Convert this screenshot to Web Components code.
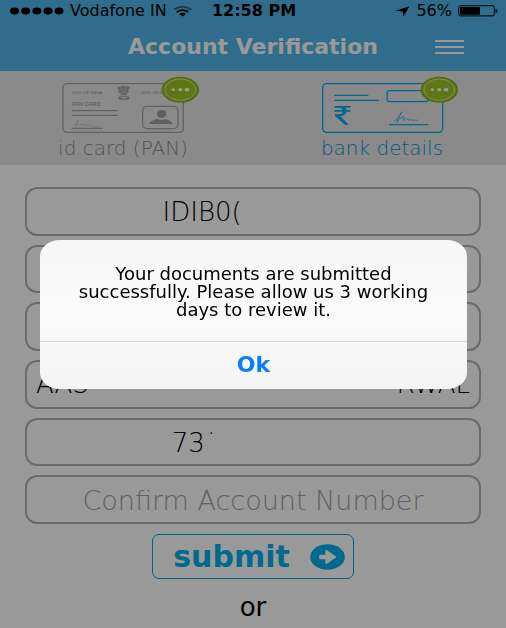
<!DOCTYPE html>
<html lang="en">
<head>
<meta charset="utf-8">
<meta name="viewport" content="width=device-width, initial-scale=1">
<title>Account Verification</title>
<style>
  html, body { margin: 0; height: 100%; }
  body { background: #fff; color: #000; font-family: "DejaVu Sans", "Noto Sans", sans-serif; overflow: hidden; }
</style>
</head>
<body>
<verification-app></verification-app>
<script>
const define = (name, markup, setup) => {
  const template = document.createElement('template');
  template.innerHTML = markup;
  customElements.define(name, class extends HTMLElement {
    constructor() {
      super();
      this.attachShadow({ mode: 'open' }).append(template.content.cloneNode(true));
    }
    connectedCallback() { if (setup) setup(this, this.shadowRoot); }
  });
};

define('status-bar', `
<style>
  :host { display: grid; grid-template-columns: 1fr auto 1fr; align-items: center; height: 22px; padding: 0 8px 0 10px; font-size: 16px; line-height: 18px; }
  div { display: flex; align-items: center; gap: 6px; }
  .end { justify-content: flex-end; }
  .time { font-weight: 700; }
  svg { display: block; flex: none; }
</style>
<div>
  <svg width="54" height="8" viewBox="0 0 54 8" aria-hidden="true"><ellipse cx="4.5" cy="4" rx="4.5" ry="3.4"/><ellipse cx="15.6" cy="4" rx="4.5" ry="3.4"/><ellipse cx="26.8" cy="4" rx="4.5" ry="3.4"/><ellipse cx="38" cy="4" rx="4.5" ry="3.4"/><ellipse cx="49" cy="4" rx="4.5" ry="3.4"/></svg>
  <span>Vodafone IN</span>
  <svg width="19" height="11" viewBox="0 0 19 11" fill="none" aria-hidden="true"><path d="M.8 3.6Q9.5-2 18.2 3.6" stroke="#000" stroke-opacity=".5" stroke-width="1.6"/><path d="M3.6 6Q9.5 2.1 15.4 6" stroke="#000" stroke-width="1.7"/><path d="M6 8Q9.5 5.6 13 8L9.5 10.6Z" fill="#000"/></svg>
</div>
<span class="time">12:58 PM</span>
<div class="end">
  <svg width="15" height="11" viewBox="0 0 15 11" aria-hidden="true"><path d="M14.5.2 8.4 10.6 7.6 5.4.4 4.7Z"/></svg>
  <span>56%</span>
  <svg width="40" height="12" viewBox="0 0 40 12" aria-hidden="true"><rect x=".7" y=".7" width="35.6" height="10.2" rx="2" fill="none" stroke="#000"/><rect x="2" y="2" width="20" height="7.8" rx="1"/><path d="M37.5 4Q39.7 4.3 39.7 6T37.5 8Z"/></svg>
</div>`);

define('title-bar', `
<style>
  :host { display: grid; grid-template-columns: 1fr auto 1fr; align-items: center; height: 49px; padding: 0 42px; color: #fff; }
  h1 { grid-column: 2; margin: 0; font-size: 22px; line-height: 24px; font-weight: 700; white-space: nowrap; }
  button { justify-self: end; display: grid; gap: 4px; padding: 0; border: 0; background: none; }
  i { width: 29px; height: 2px; background: #fff; }
</style>
<h1><slot></slot></h1>
<button type="button" aria-label="Menu"><i></i><i></i><i></i></button>`);

define('document-tab', `
<style>
  :host { display: block; width: 142px; color: #8c8c8c; }
  :host([active]) { color: #0096d2; }
  button { display: block; width: 100%; padding: 0; border: 0; background: none; color: inherit; font: inherit; text-align: left; }
  .label { display: flex; justify-content: center; padding-right: 10px; font-size: 20px; line-height: 28px; font-weight: 200; white-space: nowrap; }
</style>
<button type="button"><slot name="icon"></slot><span class="label"><slot></slot></span></button>`);

define('form-field', `
<style>
  :host { display: flex; box-sizing: border-box; min-width: 0; min-height: 48px; border: 2px solid #b2b2b2; border-radius: 12px; overflow: hidden; }
  label { display: flex; flex: 1; min-width: 0; }
  input { flex: 1; width: 100%; min-width: 0; box-sizing: border-box; border: 0; padding: 2px 9px 0; background: none; color: #000; font: 200 26px/30px "DejaVu Sans", "Noto Sans", sans-serif; outline: 0; }
  input::placeholder { color: #a2a2a8; opacity: 1; }
  :host([align=center]) input { text-align: center; font-size: 27px; }
  :host([align=code]) input { padding-left: 30%; }
  :host([align=number]) input { padding-left: 32%; }
  :host([align=right]) input { text-align: right; }
  :host([bare]) { flex: 1; border: 0; min-height: 0; }
  :host([bare]) input { padding-top: 0; }
</style>
<label><input type="text"></label>`, (host, root) => {
  const input = root.querySelector('input');
  input.value = host.getAttribute('value') || '';
  input.placeholder = host.getAttribute('placeholder') || '';
  input.setAttribute('aria-label', host.getAttribute('label') || '');
});

define('submit-button', `
<style>
  :host { display: flex; justify-content: center; }
  button { display: flex; align-items: center; gap: 20px; height: 45px; padding: 0 8px 0 20px; border: 1px solid #00a2e0; border-radius: 7px; background: none; color: #00b0ec; font: 700 30px/36px "DejaVu Sans", sans-serif; }
  svg { display: block; }
</style>
<button type="submit"><slot></slot>
  <svg width="35" height="26" viewBox="0 0 105 78" aria-hidden="true"><ellipse cx="52.500" cy="39" rx="52" ry="38" fill="currentColor"/><path d="M29 32H46V22Q46 16 51 19L77 37Q80 39 77 41L51 59Q46 62 46 56V46H29Q25 39 29 32Z" fill="#fff"/></svg>
</button>`);

define('alert-dialog', `
<style>
  :host { position: fixed; inset: 0; display: flex; align-items: center; padding: 0 39px 0 40px; background: rgba(0,0,0,.4); }
  dialog { position: static; display: block; box-sizing: border-box; width: 100%; max-width: none; margin: 0; padding: 0; border: 0; border-radius: 20px / 16px; background: linear-gradient(#f6f6f6, #fafafa 50%, #f4f4f4); color: #000; overflow: hidden; }
  p { margin: 0; padding: 25px 20px 22px; text-align: center; font-size: 18px; line-height: 18px; }
  button { display: block; width: 100%; height: 48px; border: 0; border-top: 1px solid #d8d8d8; padding: 0; background: none; color: #0a7cff; font: 700 22px/24px "DejaVu Sans", sans-serif; }
</style>
<dialog open aria-label="Submission status"><p><slot></slot></p><button type="button">Ok</button></dialog>`);

define('verification-app', `
<style>
  :host { display: block; }
  header { background: #50b5e8; }
  nav { display: flex; justify-content: space-between; box-sizing: border-box; height: 94px; padding: 4px 48px 0 57px; background: #e6e6e6; }
  svg { display: block; width: 142px; height: 59px; }
  form { padding: 22px 25px 0; }
  .fields { display: grid; grid-template-columns: minmax(0, 1fr); grid-auto-rows: 1fr; gap: 9px; min-height: 337px; }
  .split { display: flex; border: 2px solid #b2b2b2; border-radius: 12px; box-sizing: border-box; min-width: 0; overflow: hidden; }
  submit-button { margin-top: 10px; }
  .or { margin: 12px 0 0; text-align: center; font-size: 26px; line-height: 32px; }
</style>
<header><status-bar></status-bar><title-bar>Account Verification</title-bar></header>
<nav>
  <document-tab>
    <svg slot="icon" viewBox="21 15 426 177" fill="none" stroke="#a4a4a4" stroke-width="4" aria-hidden="true">
      <rect x="39" y="41" width="361" height="146" rx="12"/>
      <path d="M65 122H203M65 136H203M65 175H159"/>
      <path d="M72 167Q82 158 84 150Q80 164 76 170Q89 158 96 164Q106 168 112 165T126 168T146 169" stroke-width="1.500"/>
      <g fill="#8c8c8c" stroke="none" font-family="Liberation Sans, sans-serif"><text x="65" y="73" font-size="13">GOV. OF INDIA</text><text x="272" y="73" font-size="13">GOV. OF INDIA</text><text x="65" y="107" font-size="17">PAN CARD</text></g>
      <g fill="#a4a4a4" stroke="none"><path d="M213 50Q220 45 227 50Q238 47 240 54L235 58Q238 66 232 70L229 75H213L210 69Q203 66 206 59L201 54Q206 48 213 50Z"/><path d="M207 77H236V80H207ZM204 84Q209 78 214 83H229Q235 78 239 84Q239 90 231 89H212Q205 90 204 84Z"/></g>
      <path d="M211 57H217M225 57H231M214 64V71M221 59V72M228 64V71M217 86H226" stroke="#e6e6e6" stroke-width="2"/>
      <rect x="278" y="109" width="106" height="67" rx="13"/>
      <path d="M321 126Q324 120 334 120Q346 120 348 127V134Q346 143 335 144Q323 142 321 134ZM297 162Q302 151 322 147Q334 153 346 147Q365 153 369 162Z" fill="#a0a0a0" stroke="none"/>
      <ellipse cx="391" cy="59" rx="54" ry="37" fill="#a0c420" stroke="#8cae1c" stroke-width="4"/><ellipse cx="391" cy="59" rx="46" ry="32" stroke="#d8e8a4" stroke-width="3"/>
      <g fill="#fff" stroke="none"><ellipse cx="370" cy="59" rx="5" ry="4"/><ellipse cx="391" cy="59" rx="6" ry="5"/><ellipse cx="411" cy="59" rx="7" ry="5.500"/></g>
    </svg>id card (PAN)</document-tab>
  <document-tab active>
    <svg slot="icon" viewBox="18 15 426 177" fill="none" stroke="#00aceb" stroke-width="4" aria-hidden="true">
      <rect x="38" y="41" width="360" height="146" rx="12"/>
      <path d="M73 76H175M73 91H207M237 164H355"/><rect x="231" y="62" width="124" height="33" rx="7"/>
      <path d="M74 108H123L120 113H104Q109 116 110 120H123L120 125H110Q107 137 91 138L116 164H104L75 138V133H84Q97 132 99 125H72L75 120H98Q95 113 84 113H72Z" fill="#00aceb" stroke="none"/>
      <path d="M252 154Q270 141 276 125Q266 143 260 157Q276 136 283 141Q275 153 282 151Q292 141 294 151Q301 145 305 151Q314 149 324 151" stroke-width="2"/>
      <ellipse cx="388" cy="59" rx="54" ry="37" fill="#a0c420" stroke="#8cae1c" stroke-width="4"/><ellipse cx="388" cy="59" rx="46" ry="32" stroke="#d8e8a4" stroke-width="3"/>
      <g fill="#fff" stroke="none"><ellipse cx="367" cy="59" rx="5" ry="4"/><ellipse cx="388" cy="59" rx="6" ry="5"/><ellipse cx="408" cy="59" rx="7" ry="5.500"/></g>
    </svg>bank details</document-tab>
</nav>
<form>
  <div class="fields">
    <form-field align="code" label="IFSC code" value="IDIB0("></form-field>
    <form-field label="Bank name"></form-field>
    <form-field label="Branch"></form-field>
    <div class="split"><form-field bare label="First name" value="AAS"></form-field><form-field bare align="right" label="Last name" value="RWAL"></form-field></div>
    <form-field align="number" label="Account number" value="73˙"></form-field>
    <form-field align="center" label="Confirm account number" placeholder="Confirm Account Number"></form-field>
  </div>
  <submit-button>submit</submit-button>
  <p class="or">or</p>
</form>
<alert-dialog>Your documents are submitted successfully. Please allow us 3 working days to review it.</alert-dialog>`);
</script>
</body>
</html>
